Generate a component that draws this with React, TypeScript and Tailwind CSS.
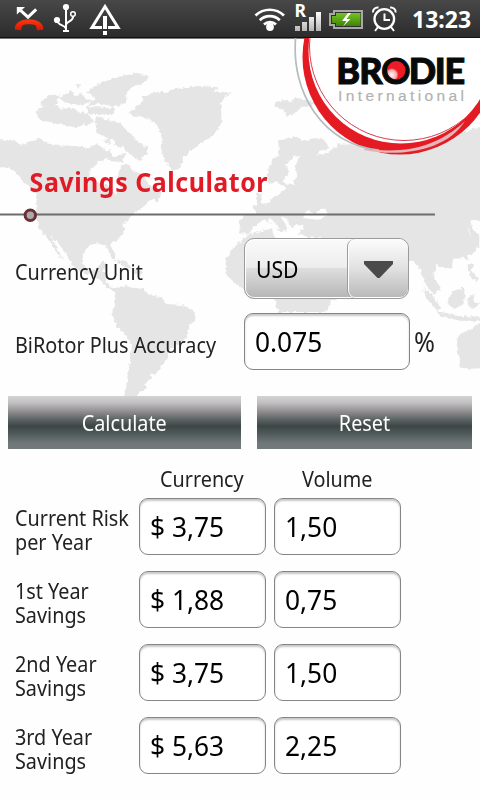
import type { ReactNode } from "react";

const rows = [
  { label: ["Current Risk", "per Year"], currency: "$ 3,75", volume: "1,50" },
  { label: ["1st Year", "Savings"], currency: "$ 1,88", volume: "0,75" },
  { label: ["2nd Year", "Savings"], currency: "$ 3,75", volume: "1,50" },
  { label: ["3rd Year", "Savings"], currency: "$ 5,63", volume: "2,25" },
];

function StatusBar() {
  return (
    <header className="relative flex h-[38px] w-full items-center bg-gradient-to-b from-[#484848] to-[#2b2b2b] shadow-[inset_0_-1px_0_#111]">
      <svg className="h-[38px] w-[410px] shrink-0 overflow-visible" viewBox="0 0 410 38" fill="none">
        <defs>
          <linearGradient id="phone" x1="0" y1="19" x2="0" y2="31" gradientUnits="userSpaceOnUse">
            <stop stopColor="#ff3a12" />
            <stop offset="1" stopColor="#d41400" />
          </linearGradient>
          <linearGradient id="bars" x1="0" y1="12" x2="0" y2="31" gradientUnits="userSpaceOnUse">
            <stop stopColor="#fff" />
            <stop offset="1" stopColor="#b5b5b5" />
          </linearGradient>
          <linearGradient id="battery" x1="0" y1="12" x2="0" y2="27" gradientUnits="userSpaceOnUse">
            <stop stopColor="#7fc52c" />
            <stop offset=".5" stopColor="#58a514" />
            <stop offset="1" stopColor="#3c7d08" />
          </linearGradient>
        </defs>
        {/* missed call */}
        <path d="M36.2 9.3 28 17.2 20 9.8" stroke="#fff" strokeWidth="3" />
        <path d="M16.8 7H25l-8.2 7.4z" fill="#fff" />
        <path d="M15 29.8c-1.2-6 5.400-10.500 14-10.500s15.400 4.500 14.200 10.500l-5.700.4c-1.300-.2-.8-4.200-2.100-4.900-3-1.400-9.600-1.400-12.700 0-1.300.7-.8 4.700-2.100 4.900z" fill="url(#phone)" />
        {/* usb */}
        <path d="M66 8v23M66 28.500c-2-4.500-8-2.500-8.600-8M66 24.500c2-4 7.200-2.500 7.200-9" stroke="#fff" strokeWidth="2" />
        <circle cx="66" cy="7" r="3.100" fill="#fff" />
        <circle cx="57" cy="20" r="3.100" fill="#fff" />
        <circle cx="73" cy="14" r="2.300" fill="#3c3c3c" stroke="#fff" strokeWidth="1.500" />
        <path d="M63 30h6v2h-6z" fill="#fff" />
        {/* warning */}
        <path d="M102 27.500H92L105 6.500l13 21h-10" stroke="#fff" strokeWidth="3" />
        <path d="M103 16h4v13h-4zM103 31h4v4h-4z" fill="#fff" />
        {/* wifi */}
        <path d="M255.500 15.500a20.500 20.500 0 0 1 28.500 0M259.800 20.200a14.500 14.500 0 0 1 20 0M264 24.500a8.700 8.700 0 0 1 12 0" stroke="#fff" strokeWidth="2.700" />
        <circle cx="270" cy="27" r="3.900" fill="#fff" />
        {/* signal */}
        <text x="294.500" y="17" fill="#fff" className="font-['Noto_Sans'] text-[17.500px] font-bold">R</text>
        <path d="M295 26h5v5h-5zM302 22h5v9h-5zM309 17h5v14h-5zM316 12h5v19h-5z" fill="url(#bars)" />
        {/* battery */}
        <path d="M334 11h28v17h-28v-3h-4v-11h4z" fill="#303030" stroke="#a8a8a8" strokeWidth="2" />
        <path d="M336 13h24.500v13H336v-3h-4v-7h4z" fill="url(#battery)" />
        <path d="m348 13-6 8h4.500l-3.500 5.500 7.500-7.500h-4l4.500-6z" fill="#fff" />
        {/* alarm */}
        <circle cx="384.300" cy="19" r="9.800" stroke="#fff" strokeWidth="2.300" />
        <path d="M384.500 13.500V20h5.500M378 27l-3 4M391 27l3 4M373 12.500c-.5-3 2.300-5.500 5.500-5M395.600 12.500c.5-3-2.300-5.500-5.500-5" stroke="#fff" strokeWidth="2" />
      </svg>
      <span className="ml-[2px] font-['Noto_Sans'] text-[23px] font-bold leading-[38px] text-white">13:23</span>
    </header>
  );
}

/* Coordinates are three units to a pixel, measured from below the status bar. */
function WorldMap() {
  return (
    <svg className="absolute left-0 top-0 h-[362px] w-[480px]" viewBox="0 0 1440 1086">
      <defs>
        <filter id="coast" x="-5%" y="-5%" width="110%" height="110%" colorInterpolationFilters="sRGB">
          <feTurbulence type="fractalNoise" baseFrequency="0.09" numOctaves="2" seed="4" />
          <feDisplacementMap in="SourceGraphic" scale="14" xChannelSelector="R" yChannelSelector="G" />
        </filter>
      </defs>
      <g fill="#e5e5e5" filter="url(#coast)">
        {/* north america */}
        <path d="M-10 302 48 310 65 320 115 300 140 316 175 322 235 325 262 330 290 318 306 326 318 340 330 332 330 360 300 370 268 398 268 420 300 436 330 445 345 470 362 450 352 420 362 380 385 378 400 400 420 405 450 440 470 455 482 478 455 480 438 500 410 520 388 540 370 562 374 585 352 602 330 622 346 648 345 672 330 650 318 622 290 616 262 625 248 650 250 680 268 700 290 690 310 668 322 680 305 700 328 712 316 728 330 745 358 752 352 764 325 750 302 728 275 712 240 700 215 680 198 645 170 610 150 590 172 628 190 668 178 655 150 612 118 570 108 535 110 500 108 468 88 448 60 420 40 395-10 382Z" />
        {/* arctic islands */}
        <path d="M108 222 124 206 162 196 180 212 222 210 246 232 252 262 226 268 190 262 150 252 118 248Z" />
        <path d="M120 194 150 170 180 170 168 198 130 204ZM176 180 214 158 226 172 250 178 276 190 240 202 200 194ZM226 140 240 138 236 152ZM226 180 245 164 256 196 230 200ZM260 162 300 136 340 120 410 104 448 116 430 134 396 146 380 168 378 194 340 208 300 196 262 206 284 180Z" />
        <path d="M258 206 344 210 338 232 262 226ZM218 222 262 224 284 252 258 262ZM286 238 322 244 356 254 384 280 404 300 424 322 442 325 444 348 424 354 424 368 404 362 380 338 362 322 340 306 312 296 288 280ZM320 340 352 350 376 345 370 372 336 370 318 362ZM345 310 376 322 364 330 342 322ZM306 306 330 302 328 322Z" />
        {/* greenland */}
        <path d="M384 226 430 190 428 175 470 160 502 164 520 154 600 144 660 148 634 160 698 164 676 176 662 200 665 250 652 280 630 298 598 320 570 340 550 360 542 388 520 398 494 370 482 330 485 298 470 260 440 240 400 234Z" />
        {/* south america */}
        <path d="M355 754 378 742 388 748 430 752 448 772 486 778 500 798 550 802 584 822 585 845 564 870 558 902 540 918 510 930 504 960 482 988 465 1010 450 1005 456 1022 432 1038 440 1050 418 1064 402 1090 368 1090 378 1050 385 1000 392 960 396 920 380 895 352 866 334 826 345 805 342 785Z" />
        {/* caribbean and newfoundland */}
        <path d="M350 664 376 672 402 692 376 688 356 676ZM402 694 430 700 424 710 400 704ZM438 452 465 446 484 464 474 492 448 480Z" />
        {/* svalbard and british isles */}
        <path d="M822 194 850 186 870 190 888 180 930 186 945 200 910 206 898 214 880 228 862 234 850 218 830 206ZM768 470 785 462 784 488 798 510 775 522 758 512 772 500Z" />
        {/* europe and asia */}
        <path d="M834 312 860 300 890 296 904 308 950 300 974 308 990 330 960 338 950 350 982 344 1015 320 1085 318 1200 330 1250 320 1460 262V560L1418 545 1400 555 1410 592 1428 612 1432 638 1400 655 1360 662 1355 690 1330 690 1310 678 1300 712 1322 752 1300 770 1280 742 1268 720 1260 696 1240 668 1220 668 1190 700 1172 735 1160 720 1150 680 1130 665 1090 672 1040 648 1020 640 1060 690 1030 714 970 690 950 655 938 620 970 600 930 598 905 604 890 588 912 568 890 558 872 572 862 545 842 532 862 572 844 584 818 560 792 544 766 562 746 588 718 586 720 548 736 528 776 532 756 506 802 498 820 478 842 464 862 448 842 440 830 430 808 440 798 420 806 390 820 366 838 352Z" />
        {/* africa */}
        <path d="M742 592 816 570 822 595 850 610 884 604 950 614 962 650 990 700 1020 718 1060 712 1040 765 1000 785 975 822H835L820 772 800 756 745 764 712 742 680 712 676 666 700 630Z" />
        {/* east asia and oceania */}
        <path d="M1396 546 1408 542 1420 576 1438 590V630L1420 614 1408 578ZM1392 642 1404 640 1402 668 1392 662ZM1402 680 1420 675 1414 700 1438 722 1432 732 1408 712ZM1268 750 1292 766 1324 810 1310 818 1280 785ZM1310 820 1340 825 1372 834 1440 836V850L1380 848 1320 835ZM1345 780 1362 760 1390 748 1398 770 1388 802 1365 812 1345 802ZM1402 780 1424 766 1420 790 1438 798 1420 812 1404 806ZM1372 900 1384 885 1410 876 1460 840V985L1405 994 1378 988 1380 960 1370 940Z" />
      </g>
      {/* inland seas and bays */}
      <g fill="#fefefe" filter="url(#coast)">
        <path d="M858 378 880 358 902 352 890 374 884 390 892 410 880 438 858 440 850 428 868 400ZM908 540 918 518 942 528 974 508 984 530 952 545ZM820 590 850 584 868 592 900 590 942 602 940 615 880 608 830 604ZM800 540 812 542 840 572 830 576ZM155 285 190 278 200 292 170 298ZM200 295 226 292 220 306ZM332 338 350 330 360 350 340 358Z" />
      </g>
    </svg>
  );
}

function Logo() {
  return (
    <svg className="absolute left-0 top-0 h-[130px] w-[480px]" viewBox="0 38 480 130" fill="none">
      <defs>
        <radialGradient id="ball" cx="0.25" cy="0.75" r="0.6">
          <stop stopColor="#fff" />
          <stop offset=".45" stopColor="#f7a3a6" />
          <stop offset=".62" stopColor="#ed1c24" />
        </radialGradient>
        <clipPath id="disc">
          <circle cx="401" cy="51" r="92.500" />
        </clipPath>
      </defs>
      <circle cx="400" cy="57" r="97.500" fill="#e51b24" />
      <circle cx="401" cy="51" r="92.500" fill="#fff" />
      <circle cx="404" cy="46" r="94.500" stroke="#d93a50" strokeWidth="1" clipPath="url(#disc)" />
      <path d="M295.600 38C291 92 322 144 379 150.200" stroke="#b4bcbf" strokeWidth="1.700" />
      <path d="M364 148.500c42 6 74-2 101-27.500-18 30-66 36.500-101 29z" fill="#e3b5b8" />
      <path d="M398 147.500c26-1 45-9 62-24" stroke="#e51b24" strokeWidth="1.200" />
      <text x="336.300 359.300 381.200 408.800 434.800 444.500" y="83.500" fill="#080a0a" stroke="#080a0a" strokeWidth="1" className="font-[Lato] text-[36px] font-black">BRODIE</text>
      <circle cx="396.300" cy="70.300" r="9.200" fill="url(#ball)" />
      <text x="338" y="101" textLength="126" fill="#b2b2b2" stroke="#b2b2b2" strokeWidth=".2" className="font-['Liberation_Sans'] text-[15.500px]">International</text>
    </svg>
  );
}

function Field({ children, wide = false }: { children: string; wide?: boolean }) {
  return (
    <div className={`flex h-[57px] shrink-0 items-center rounded-[9px] border-[1.5px] border-[#858585] bg-white pb-[2px] pl-[10px] shadow-[inset_0_2px_2px_rgba(0,0,0,0.22)] ${wide ? "w-[166px]" : "w-[127px]"}`}>
      <span className="origin-left scale-x-[0.94] whitespace-pre text-[28px] leading-none text-black">{children}</span>
    </div>
  );
}

function Label({ children }: { children: ReactNode }) {
  return <span className="block origin-left scale-x-[0.9] whitespace-nowrap text-[22px] leading-6 text-[#222]">{children}</span>;
}

function ActionButton({ children, className }: { children: string; className: string }) {
  return (
    <button className={`flex h-[53px] items-center justify-center bg-[linear-gradient(to_bottom,#d4d3d4_0%,#c3c1c3_12%,#8e8c8d_30%,#5f6766_43%,#3d4645_57%,#525b5c_72%,#6e7678_88%,#737a7b_100%)] text-[22px] text-white ${className}`}>
      <span className="scale-x-[0.9]">{children}</span>
    </button>
  );
}

export default function App() {
  return (
    <div className="h-[800px] w-[480px] overflow-hidden bg-[#fefefe] font-['Noto_Sans',sans-serif]">
      <StatusBar />
      <main className="relative h-[762px] shadow-[inset_0_1px_0_#777]">
        <WorldMap />
        <Logo />
        <div className="relative flex flex-col">
          <div className="h-[176px] pt-[126px]">
            <h1 className="origin-left scale-x-[0.925] whitespace-nowrap pl-[32px] text-[27px] font-bold leading-9 tracking-[0.56px] text-[#e01b26]">Savings Calculator</h1>
          </div>
          <svg className="h-[16px] w-[480px] overflow-visible" viewBox="0 176 480 16" fill="none">
            <path d="M0 176.500h435" stroke="#6c6c6c" strokeWidth="2" />
            <circle cx="30.300" cy="177.300" r="5.200" fill="#aaa" stroke="#6b2f38" strokeWidth="3" />
          </svg>
          <div className="-mt-[1px] flex h-[79px] items-center pl-[15px]">
            <div className="w-[229px] pt-[5px]"><Label>Currency Unit</Label></div>
            <button className="flex h-[61px] w-[165px] overflow-hidden rounded-[10px] border border-[#9b9b9b] bg-[linear-gradient(to_bottom,#fafafa_0%,#ededed_48%,#dedede_50%,#b5b5b5_100%)] text-left shadow-[inset_0_0_0_1px_#fff]">
              <span className="flex h-full w-[102px] items-center pl-[11px] pt-[2px] text-[23px] text-black"><span className="origin-left scale-x-[0.92]">USD</span></span>
              <span className="flex h-full flex-1 items-center justify-center rounded-lg border-l border-[#9b9b9b] bg-[linear-gradient(to_bottom,#fdfdfd,#e1e1e1_50%,#b8b8b8)] pt-[2px] shadow-[inset_1px_0_0_#fff,inset_0_-1px_0_#fff]">
                <svg width="30" height="20" viewBox="0 0 30 20"><path d="M1 1h29v3L16.500 18h-2L1 4z" fill="#4b4b4b" /></svg>
              </span>
            </button>
          </div>
          <div className="mt-[5px] flex h-[57px] items-center pl-[15px]">
            <div className="w-[229px] pt-[4px]"><Label>BiRotor Plus Accuracy</Label></div>
            <Field wide>0.075</Field>
            <span className="ml-[4px] origin-left scale-x-90 pb-[1px] text-[28px] leading-none text-[#222]">%</span>
          </div>
          <div className="mt-[26px] flex gap-4 px-2">
            <ActionButton className="w-[233px]">Calculate</ActionButton>
            <ActionButton className="w-[215px]">Reset</ActionButton>
          </div>
          <div className="flex h-[49px] items-end pb-[8px] pl-[160px]">
            <div className="w-[142px]"><Label>Currency</Label></div>
            <Label>Volume</Label>
          </div>
          <div className="flex flex-col gap-4 pl-[15px]">
            {rows.map((row) => (
              <div key={row.label[0]} className="flex h-[57px] gap-2">
                <div className="w-[116px] pt-[7px]">
                  <Label>{row.label[0]}<br />{row.label[1]}</Label>
                </div>
                <Field>{row.currency}</Field>
                <Field>{row.volume}</Field>
              </div>
            ))}
          </div>
        </div>
      </main>
    </div>
  );
}
